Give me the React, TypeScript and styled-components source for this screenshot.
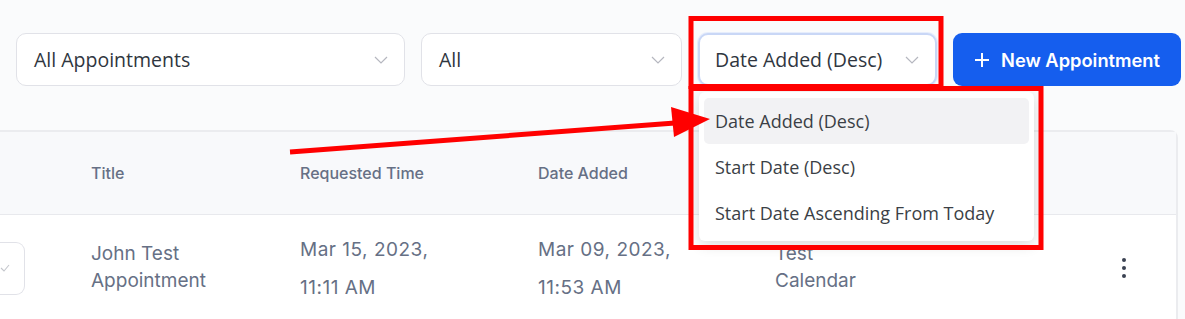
import React from 'react';
import styled, { createGlobalStyle } from 'styled-components';

const GlobalStyle = createGlobalStyle`
  html, body {
    margin: 0;
    padding: 0;
    background: #fafbfc;
    overflow: hidden;
  }
  body {
    font-family: 'Open Sans', 'Liberation Sans', sans-serif;
  }
`;

const Page = styled.div`
  position: relative;
  width: 1185px;
  height: 319px;
  overflow: hidden;
  background: #fafbfc;
`;

const Toolbar = styled.div`
  display: flex;
  align-items: center;
  gap: 16px;
  padding: 33px 0 0 16px;
  height: 53px;
`;

const SelectWrap = styled.div`
  position: relative;
`;

const SelectBox = styled.div<{ width: number; focused?: boolean }>`
  box-sizing: border-box;
  width: ${(p) => p.width}px;
  height: 53px;
  display: flex;
  align-items: center;
  justify-content: space-between;
  padding: 0 16px 0 ${(p) => (p.focused ? 15 : 17)}px;
  background: #fff;
  border: ${(p) => (p.focused ? '2px solid #c9d7f6' : '1px solid #e1e2e8')};
  border-radius: 10px;
  font-size: 19.5px;
  color: #2f3640;
  box-shadow: ${(p) => (p.focused ? '0 0 0 1px #e6edfc' : 'none')};
`;

const Chevron = () => (
  <svg width="14" height="8" viewBox="0 0 14 8" fill="none">
    <path d="M1 1l6 6 6-6" stroke="#b5b7bf" strokeWidth="1.2" />
  </svg>
);

const PrimaryButton = styled.button`
  box-sizing: border-box;
  height: 53px;
  width: 228px;
  display: flex;
  align-items: center;
  gap: 11px;
  padding: 0 0 0 21px;
  border: none;
  border-radius: 9px;
  background: #155eee;
  color: #fff;
  font-family: Inter, 'Liberation Sans', sans-serif;
  font-size: 18.3px;
  font-weight: 600;
  white-space: nowrap;
`;

const Menu = styled.div`
  position: absolute;
  top: 59px;
  left: 1px;
  width: 335px;
  box-sizing: border-box;
  padding: 6px 5px 5px;
  background: #fff;
  border-radius: 6px;
  box-shadow: 0 4px 14px rgba(0, 0, 0, 0.14);
  z-index: 5;
`;

const MenuItem = styled.div<{ active?: boolean }>`
  height: 46px;
  display: flex;
  align-items: center;
  padding-left: 11px;
  border-radius: 5px;
  background: ${(p) => (p.active ? '#f2f2f4' : 'transparent')};
  font-size: 18px;
  color: #3b3f46;
  white-space: nowrap;
`;

const Card = styled.div`
  margin: 44px 0 0 -20px;
  width: 1198px;
  box-sizing: border-box;
  background: #fff;
  border-top: 2px solid #ebecef;
  border-right: 2px solid #ebecef;
  border-top-right-radius: 8px;
  font-family: Inter, 'Liberation Sans', sans-serif;
`;

const Row = styled.div<{ head?: boolean }>`
  display: grid;
  grid-template-columns: 111px 209px 238px 237px 1fr 80px;
  align-items: center;
  height: ${(p) => (p.head ? 82 : 110)}px;
  background: ${(p) => (p.head ? '#f8f9fb' : '#fff')};
  border-bottom: ${(p) => (p.head ? '1px solid #e8e9ed' : 'none')};
`;

const HeadCell = styled.div`
  font-size: 16px;
  font-weight: 500;
  color: #667085;
`;

const Cell = styled.div<{ tall?: boolean }>`
  font-size: 19px;
  line-height: ${(p) => (p.tall ? 38 : 27)}px;
  letter-spacing: ${(p) => (p.tall ? 0.5 : 0)}px;
  color: #667085;
  margin-top: ${(p) => (p.tall ? -2 : -6)}px;
`;

const RowCheck = styled.div`
  width: 45px;
  height: 53px;
  margin-top: -4px;
  box-sizing: border-box;
  border: 1px solid #e1e2e8;
  border-left: none;
  border-radius: 0 9px 9px 0;
  display: flex;
  align-items: center;
  padding-left: 20px;
`;

const Kebab = styled.div`
  display: flex;
  flex-direction: column;
  gap: 4px;
  align-items: center;
  width: 4px;
  margin: -4px 0 0 26px;
  span {
    width: 4px;
    height: 4px;
    border-radius: 50%;
    background: #3a4252;
  }
`;

const Annotations = styled.svg`
  position: absolute;
  left: 0;
  top: 0;
  pointer-events: none;
  z-index: 10;
`;

export default function App() {
  return (
    <Page>
      <GlobalStyle />
      <Toolbar>
        <SelectBox width={389}>
          All Appointments
          <Chevron />
        </SelectBox>
        <SelectBox width={261}>
          All
          <Chevron />
        </SelectBox>
        <SelectWrap>
          <SelectBox width={239} focused>
            Date Added (Desc)
            <Chevron />
          </SelectBox>
          <Menu>
            <MenuItem active>Date Added (Desc)</MenuItem>
            <MenuItem>Start Date (Desc)</MenuItem>
            <MenuItem>Start Date Ascending From Today</MenuItem>
          </Menu>
        </SelectWrap>
        <PrimaryButton>
          <svg width="16" height="16" viewBox="0 0 16 16">
            <path d="M8 1v14M1 8h14" stroke="#fff" strokeWidth="2" />
          </svg>
          New Appointment
        </PrimaryButton>
      </Toolbar>

      <Card>
        <Row head>
          <div />
          <HeadCell>Title</HeadCell>
          <HeadCell>Requested Time</HeadCell>
          <HeadCell>Date Added</HeadCell>
          <div />
          <div />
        </Row>
        <Row>
          <RowCheck>
            <svg width="10" height="8" viewBox="0 0 10 8">
              <path d="M1 4l3 3 5-6" stroke="#c4c6cc" strokeWidth="1.1" fill="none" />
            </svg>
          </RowCheck>
          <Cell>
            John Test
            <br />
            Appointment
          </Cell>
          <Cell tall>
            Mar 15, 2023,
            <br />
            11:11 AM
          </Cell>
          <Cell tall>
            Mar 09, 2023,
            <br />
            11:53 AM
          </Cell>
          <Cell>
            Test
            <br />
            Calendar
          </Cell>
          <Kebab>
            <span />
            <span />
            <span />
          </Kebab>
        </Row>
      </Card>

      <Annotations width="1185" height="319" viewBox="0 0 1185 319">
        <rect x="691" y="18.5" width="250" height="68" fill="none" stroke="#ff0000" strokeWidth="5" />
        <rect x="691" y="88.5" width="350" height="159" fill="none" stroke="#ff0000" strokeWidth="5" />
        <line x1="290" y1="152" x2="675" y2="123" stroke="#ff0000" strokeWidth="5" />
        <polygon points="710,119 671,107 674,137" fill="#ff0000" />
      </Annotations>
    </Page>
  );
}
